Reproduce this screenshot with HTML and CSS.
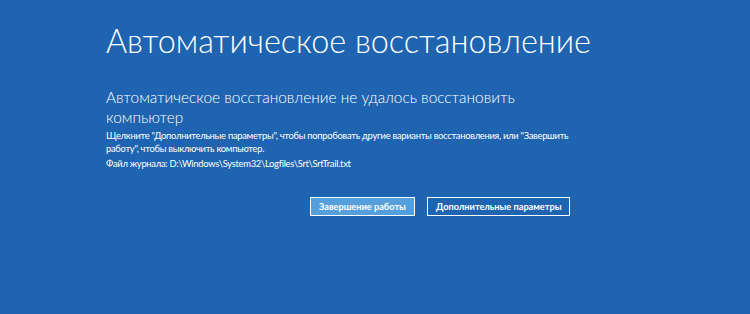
FILE: index.html
```html
<!DOCTYPE html>
<html lang="ru">
<head>
    <meta charset="UTF-8">
    <title>Автоматическое восстановление</title>
    <link rel="stylesheet" href="styles.css">
</head>
<body>
    <div class="screen">
        <h1 class="title">Автоматическое восстановление</h1>
        <div class="content">
            <div class="subtitle">Автоматическое восстановление не удалось восстановить компьютер</div>
            <p class="hint">Щелкните "Дополнительные параметры", чтобы попробовать другие варианты восстановления, или "Завершить работу", чтобы выключить компьютер.</p>
            <p class="log">Файл журнала: D:\Windows\System32\Logfiles\Srt\SrtTrail.txt</p>
        </div>
        <div class="actions">
            <button class="btn btn-primary">Завершение работы</button>
            <button class="btn">Дополнительные параметры</button>
        </div>
    </div>
</body>
</html>
```
FILE: styles.css
```css
html, body {
    margin: 0;
    padding: 0;
    height: 100%;
}
body {
    background-color: #1f64b0;
    color: #fff;
    font-family: Lato, 'Open Sans', sans-serif;
}
.screen {
    padding: 19px 0 0 106px;
}
.title {
    margin: 0;
    font-size: 32.4px;
    font-weight: 300;
    line-height: 44px;
}
.content {
    width: 470px;
    margin-top: 24px;
}
.subtitle {
    font-size: 15.4px;
    font-weight: 300;
    line-height: 20px;
}
.hint {
    margin: 2px 0 0;
    font-size: 9.4px;
    line-height: 13px;
    letter-spacing: -0.28px;
}
.log {
    margin: 2px 0 0;
    font-size: 9.4px;
    line-height: 13px;
    letter-spacing: -0.28px;
}
.actions {
    display: flex;
    gap: 12px;
    margin: 27px 0 0 204px;
}
.btn {
    height: 19px;
    padding: 0 8px;
    border: 1px solid #fff;
    background-color: transparent;
    color: #fff;
    font-family: Lato, 'Open Sans', sans-serif;
    font-size: 9.2px;
    font-weight: 700;
}
.btn-primary {
    background-color: #55a0dc;
}
```
